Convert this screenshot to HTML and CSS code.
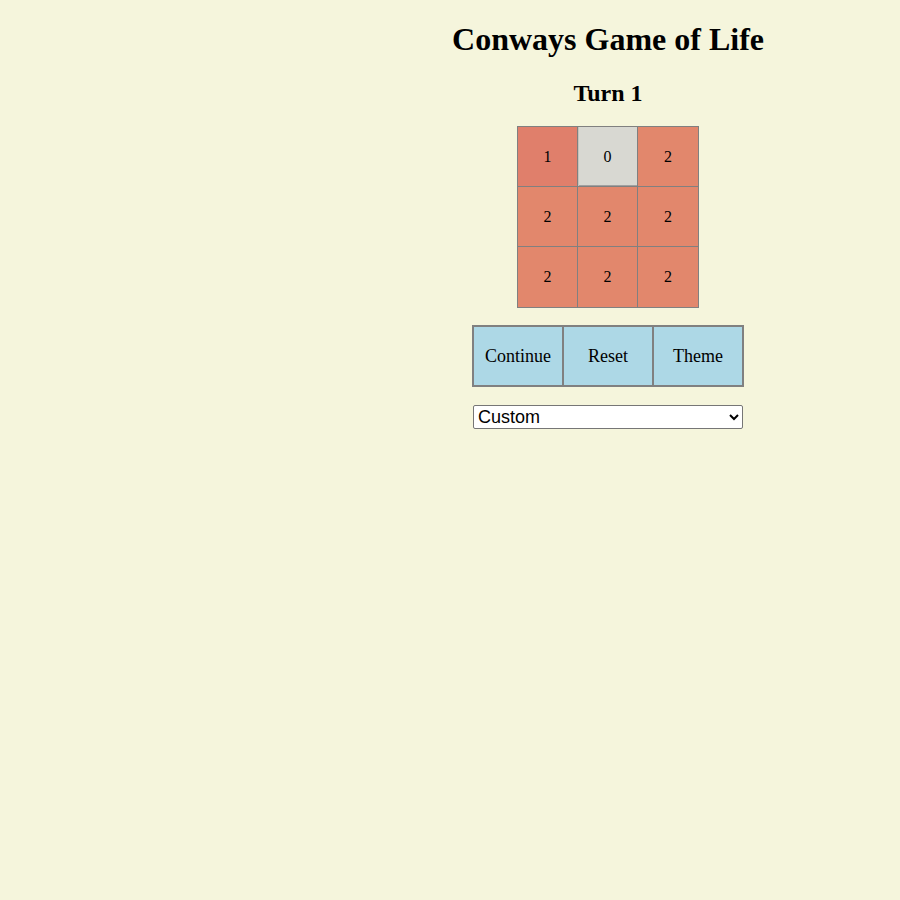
FILE: index.html
```html
<!DOCTYPE html>
<html>
<head>
<meta charset="utf-8">
<title>Conways Game of Life</title>
<link rel="stylesheet" href="styles.css">
</head>
<body>
<div class="app">
  <h1 class="title">Conways Game of Life</h1>
  <h2 class="turn">Turn 1</h2>
  <div class="board">
    <div class="cell alive one">1</div>
    <div class="cell dead">0</div>
    <div class="cell alive">2</div>
    <div class="cell alive">2</div>
    <div class="cell alive">2</div>
    <div class="cell alive">2</div>
    <div class="cell alive">2</div>
    <div class="cell alive">2</div>
    <div class="cell alive">2</div>
  </div>
  <div class="controls">
    <button class="btn">Continue</button>
    <button class="btn">Reset</button>
    <button class="btn">Theme</button>
  </div>
  <select class="pattern">
    <option>Custom</option>
    <option>Glider</option>
    <option>Blinker</option>
  </select>
</div>
</body>
</html>
```

FILE: styles.css
```css
html {
  background: #f5f5dc;
}
body {
  margin: 8px;
  width: 1200px;
  background: #f5f5dc;
  font-family: "Liberation Serif", "Times New Roman", serif;
  color: #000;
}
.app {
  display: flex;
  flex-direction: column;
  align-items: center;
}
.title {
  font-size: 32px;
  font-weight: bold;
  margin: 13px 0 22px;
}
.turn {
  font-size: 24px;
  font-weight: bold;
  margin: 0 0 19px;
}
.board {
  display: grid;
  grid-template-columns: 59px 59px 60px;
  grid-template-rows: 59px 59px 60px;
  gap: 1px;
  padding: 1px;
  background: #808080;
  margin: 0 0 17px;
}
.cell {
  display: flex;
  align-items: center;
  justify-content: center;
  font-size: 16px;
}
.alive {
  background: #e2876c;
}
.alive.one {
  background: #e07f6b;
}
.dead {
  background: #d8d8d2;
  box-shadow: inset 1px 0 0 #c4c4bc, inset 0 -1px 0 #a0a0a0;
}
.controls {
  display: flex;
  margin: 0 0 18px;
}
.btn {
  width: 92px;
  height: 62px;
  box-sizing: border-box;
  background: #add8e6;
  border: 2px solid #808080;
  font-family: "Liberation Serif", "Times New Roman", serif;
  font-size: 18px;
  color: #000;
  padding: 0;
  margin: 0;
}
.btn + .btn {
  width: 90px;
  border-left: none;
}
.pattern {
  width: 270px;
  height: 24px;
  font-family: "Liberation Sans", Arial, sans-serif;
  font-size: 18px;
  border: 1px solid #767676;
  border-radius: 2px;
  background: #fff;
  color: #000;
  padding: 0;
}
```
